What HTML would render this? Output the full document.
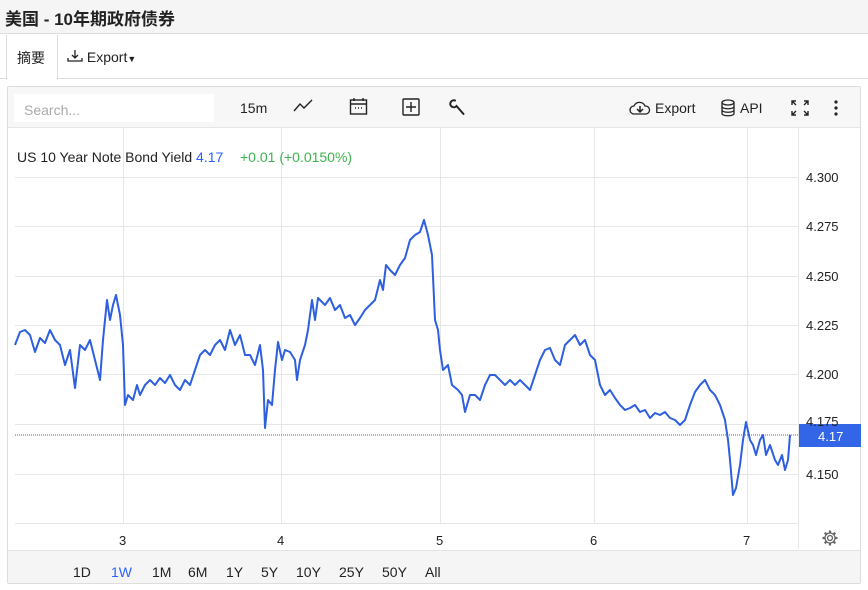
<!DOCTYPE html>
<html><head><meta charset="utf-8"><style>
*{margin:0;padding:0;box-sizing:border-box}
body{width:868px;height:590px;background:#fff;font-family:"Liberation Sans","Noto Sans CJK SC",sans-serif;position:relative;overflow:hidden;color:#222}
.title{position:absolute;left:0;top:0;width:868px;height:34px;background:#f5f5f5;border-bottom:1px solid #ddd;font-weight:bold;font-size:17px;padding:5px 0 0 5px;color:#222}
.tabs{position:absolute;left:0;top:35px;width:868px;height:44px;border-bottom:1px solid #ddd}
.tab1{position:absolute;left:6px;top:0;width:52px;height:44px;border-right:1px solid #ddd;border-left:1px solid #ddd;background:#fff;font-size:14px;padding:13px 0 0 10px}
.exp{position:absolute;left:67px;top:14px;font-size:14px}
.box{position:absolute;left:7px;top:86px;width:854px;height:498px;border:1px solid #ddd;border-radius:2px}
.tb{position:absolute;left:0;top:0;width:852px;height:41px;background:#f7f7f7;border-bottom:1px solid #e6e6e6}
.search{position:absolute;left:6px;top:7px;width:200px;height:28px;background:#fff;color:#aaa;font-size:14px;padding:8px 0 0 10px}
.t{position:absolute;font-size:14px;color:#222}
.rb{position:absolute;left:0;top:463px;width:852px;height:33px;background:#f5f5f5;border-top:1px solid #e3e3e3}
.rb span{position:absolute;top:13px;font-size:14px;color:#222}
</style></head><body>
<div class="title">美国 - 10年期政府债券</div>
<div class="tabs"><div class="tab1">摘要</div>
<div class="exp"><svg width="16" height="14" viewBox="0 0 16 14" style="vertical-align:-1px"><path d="M8 1v8M5 6l3 3 3-3M1 9v3h14V9" fill="none" stroke="#222" stroke-width="1.3"/></svg> Export<span style="font-size:9px">▼</span></div></div>
<div class="box">
<div class="tb">
<div class="search">Search...</div>
<div class="t" style="left:232px;top:13px">15m</div>
<svg class="t" style="left:285px;top:12px" width="20" height="14"><path d="M1 12l6-7 4 4 8-8" fill="none" stroke="#222" stroke-width="1.4"/></svg>
<svg class="t" style="left:341px;top:10px" width="19" height="19"><rect x="1.5" y="3" width="16" height="14" fill="none" stroke="#222" stroke-width="1.4"/><path d="M1.5 7h16M5 1v3M14 1v3" stroke="#222" stroke-width="1.4"/><path d="M6 11h1M9 11h1M12 11h1" stroke="#222" stroke-width="1.4"/></svg>
<svg class="t" style="left:394px;top:11px" width="18" height="18"><rect x="1" y="1" width="16" height="16" rx="1" fill="none" stroke="#222" stroke-width="1.4"/><path d="M9 4v10M4 9h10" stroke="#222" stroke-width="1.4"/></svg>
<svg class="t" style="left:441px;top:12px" width="17" height="18"><path d="M6 1.5a3.5 3.5 0 1 0 1.5 5.5L14.5 15" fill="none" stroke="#222" stroke-width="2" stroke-linecap="round"/><path d="M4 4l2 0" stroke="#f7f7f7" stroke-width="2"/></svg>
<svg class="t" style="left:621px;top:13px" width="22" height="16"><path d="M5 14a4 4 0 0 1 0-8 6 6 0 0 1 11 0 4 4 0 0 1 1 8z" fill="none" stroke="#222" stroke-width="1.3"/><path d="M11 6v6M8 9l3 3 3-3" fill="none" stroke="#222" stroke-width="1.5"/></svg>
<div class="t" style="left:647px;top:13px">Export</div>
<svg class="t" style="left:713px;top:12px" width="16" height="18"><ellipse cx="7" cy="3.5" rx="6" ry="2.5" fill="none" stroke="#222" stroke-width="1.3"/><path d="M1 3.5v11c0 3 12 3 12 0v-11M1 7.5c0 3 12 3 12 0M1 11c0 3 12 3 12 0" fill="none" stroke="#222" stroke-width="1.3"/></svg>
<div class="t" style="left:732px;top:13px">API</div>
<svg class="t" style="left:782px;top:12px" width="20" height="18"><path d="M2 6V2h4M2 2l4 4M18 6V2h-4M18 2l-4 4M2 12v4h4M2 16l4-4M18 12v4h-4M18 16l-4-4" fill="none" stroke="#222" stroke-width="1.4"/></svg>
<svg class="t" style="left:825px;top:12px" width="6" height="18"><circle cx="3" cy="3" r="1.6" fill="#222"/><circle cx="3" cy="9" r="1.6" fill="#222"/><circle cx="3" cy="15" r="1.6" fill="#222"/></svg>
</div>
<div class="rb"><span style="left:65px">1D</span><span style="left:103px;color:#2962ff">1W</span><span style="left:144px">1M</span><span style="left:180px">6M</span><span style="left:218px">1Y</span><span style="left:253px">5Y</span><span style="left:288px">10Y</span><span style="left:331px">25Y</span><span style="left:374px">50Y</span><span style="left:417px">All</span></div>
</div>
<svg style="position:absolute;left:0;top:0" width="868" height="590">
<g stroke="#e6e6e6" stroke-width="1">
<path d="M15 177.5H798M15 226.5H798M15 276.5H798M15 325.5H798M15 374.5H798M15 424.5H798M15 474.5H798M15 523.5H798"/>
<path d="M123.5 128V523M281.5 128V523M440.5 128V523M594.5 128V523M747.5 128V523M798.5 128V549"/>
</g>
<path d="M15 435H798" stroke="#3a64d8" stroke-width="1" stroke-dasharray="1 1"/>
<polyline fill="none" stroke="#2d5fdf" stroke-width="2" stroke-linejoin="round" points="15,345 20,332 25,330 30,335 35,352 40,338 45,343 50,330 55,340 60,345 65,365 70,350 75,388 80,345 85,350 90,340 95,360 100,380 103,340 107,300 110,320 113,305 116,295 120,315 123,345 125,405 128,395 133,400 137,385 140,395 145,385 150,380 155,385 160,378 165,383 170,375 175,385 180,390 185,380 190,385 195,370 200,355 205,350 210,355 215,345 220,340 225,350 230,330 235,345 240,335 245,355 250,355 255,365 260,345 263,370 265,428 268,400 272,405 275,370 278,342 282,360 285,350 290,352 295,360 297,380 300,360 305,345 308,330 312,300 315,320 318,298 325,305 330,298 335,310 340,305 345,318 350,315 355,325 360,318 365,310 370,305 375,300 380,280 383,290 386,265 390,270 395,275 400,265 405,258 410,240 415,235 420,232 424,220 428,235 432,255 435,320 438,330 440,350 443,370 448,365 452,385 458,390 462,395 465,412 470,395 475,395 480,400 485,385 490,375 495,375 500,380 505,385 510,380 515,385 520,380 525,385 530,390 535,375 540,360 545,350 550,348 555,360 560,365 565,345 570,340 575,335 580,345 585,340 590,355 595,360 600,385 605,395 610,390 615,398 620,405 625,410 630,408 635,405 640,412 645,410 650,418 655,413 660,415 665,412 670,418 675,420 680,425 685,420 690,405 695,392 700,385 705,380 710,390 715,395 720,405 725,420 728,440 730,460 733,495 736,488 740,465 743,440 746,422 750,440 753,445 756,455 760,440 763,435 766,455 770,445 775,460 778,465 782,455 785,470 788,460 790,435"/>
<rect x="799" y="424" width="62" height="23" fill="#3366e6"/>
<text x="818" y="441" font-family="Liberation Sans" font-size="13" fill="#fff">4.17</text>
<g font-family="Liberation Sans" font-size="13" fill="#222">
<text x="806" y="182">4.300</text><text x="806" y="231">4.275</text><text x="806" y="281">4.250</text><text x="806" y="330">4.225</text><text x="806" y="379">4.200</text><text x="806" y="426">4.175</text><text x="806" y="479">4.150</text>
<text x="119" y="545">3</text><text x="277" y="545">4</text><text x="436" y="545">5</text><text x="590" y="545">6</text><text x="743" y="545">7</text>
<text x="17" y="162" font-size="14">US 10 Year Note Bond Yield <tspan fill="#2962ff">4.17</tspan></text>
<text x="240" y="162" font-size="14" fill="#3fb34f">+0.01 (+0.0150%)</text>
</g>
<g transform="translate(830,538)" fill="none" stroke="#666" stroke-width="1.3"><circle r="2.5"/><path d="M0-7.5v2.5M0 7.5v-2.5M-7.5 0h2.5M7.5 0h-2.5M-5.3-5.3l1.8 1.8M5.3 5.3l-1.8-1.8M-5.3 5.3l1.8-1.8M5.3-5.3l-1.8 1.8" stroke-width="2.2"/><circle r="5"/></g>
</svg>
</body></html>
